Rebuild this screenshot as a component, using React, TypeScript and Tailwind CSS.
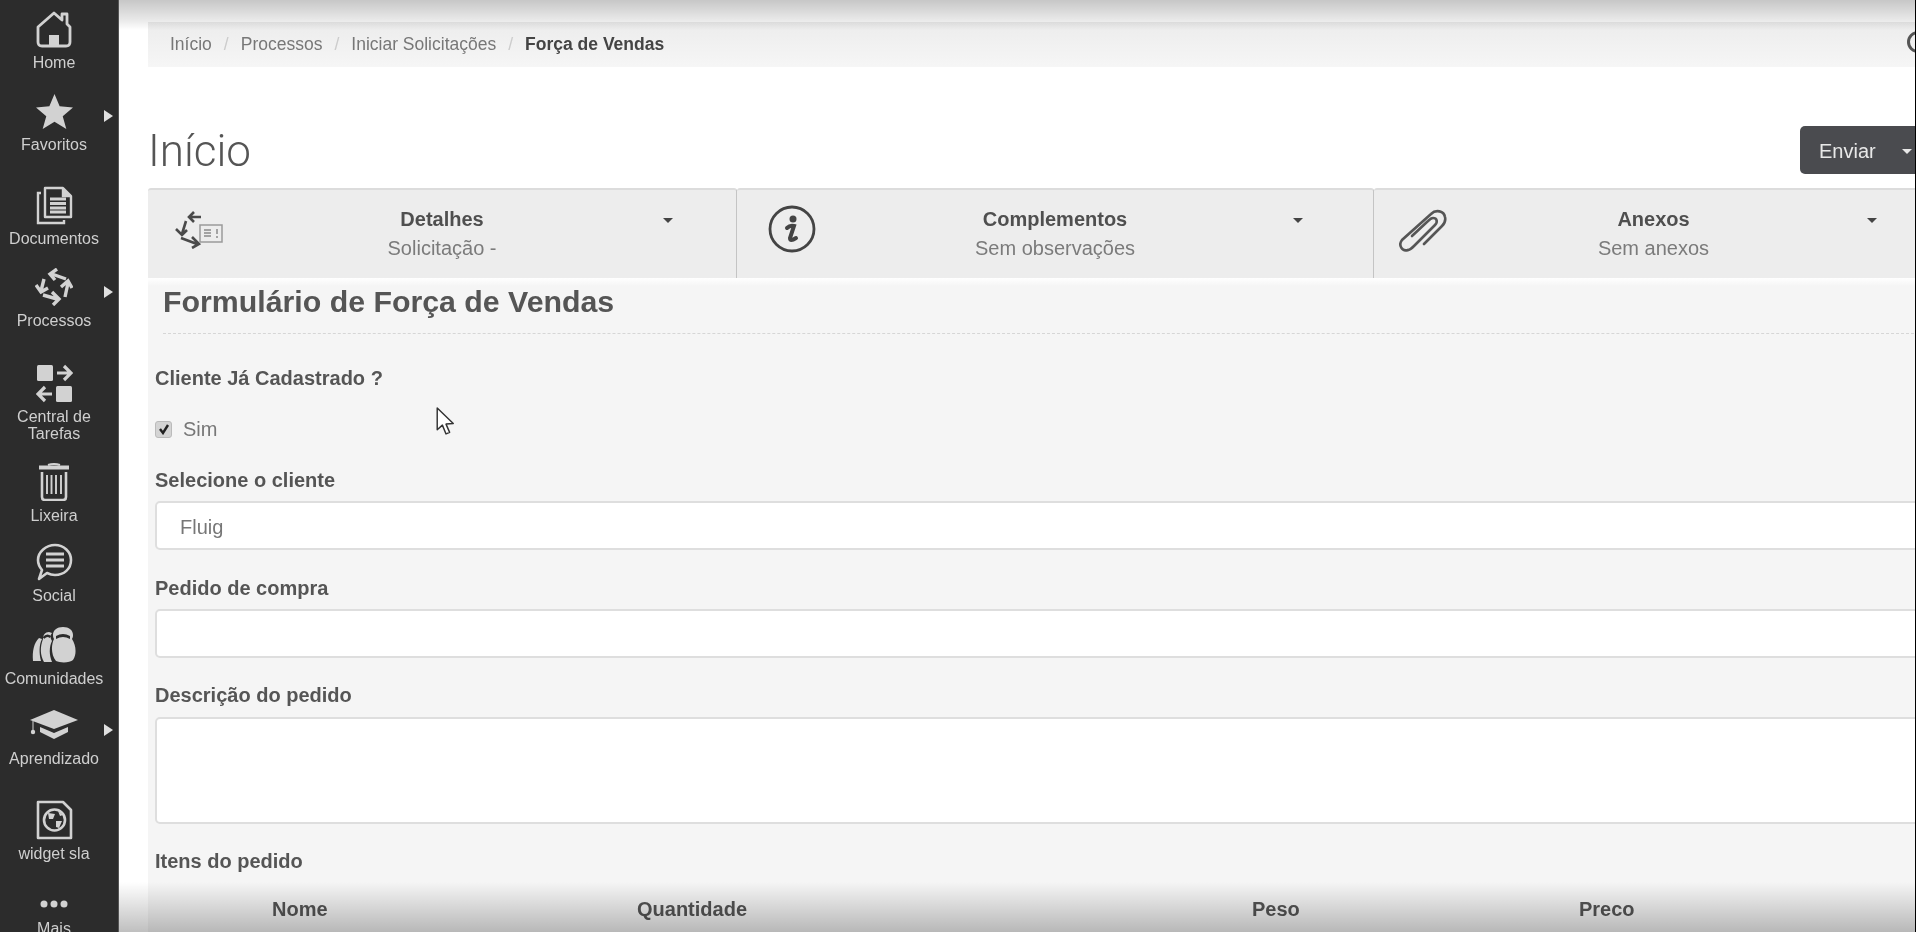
import type { ReactNode } from "react";

const Home = () => (
  <svg viewBox="0 0 36 38" className="w-[36px] h-[38px]" fill="none" stroke="currentColor" strokeWidth="2.8">
    <path d="M2 17 L18 3 L26 10 V4 H31 V14 L34 17 V32 Q34 36 30 36 H6 Q2 36 2 32 Z" strokeLinejoin="round" />
    <path d="M13 36 V25 H23 V36 Z" fill="currentColor" stroke="none" />
  </svg>
);

const Star = () => (
  <svg viewBox="0 0 36 34" className="w-[37px] h-[35px]" fill="currentColor">
    <path d="M18 0 L23 12 L36 13 L26 21.5 L29.5 34 L18 27 L6.5 34 L10 21.5 L0 13 L13 12 Z" />
  </svg>
);

const Docs = () => (
  <svg viewBox="0 0 37 39" className="w-[37px] h-[39px]" fill="none" stroke="currentColor" strokeWidth="2.4">
    <path d="M9 2 H27 L35 10 V31 H9 Z" strokeLinejoin="round" />
    <path d="M27 2 V10 H35" fill="currentColor" />
    <path d="M5 7 H2 V37 H28 V34" />
    <path d="M14 13 H30 M14 17.5 H30 M14 22 H30 M14 26 H30" strokeWidth="2.8" />
  </svg>
);

const Arrows = () => (
  <svg viewBox="0 0 38 38" className="w-[38px] h-[38px]" fill="none" stroke="currentColor" strokeWidth="3.4">
    <path d="M31 11 L17 6 M22 1 L15 6 L20 12" />
    <path d="M9 11 L6 23 M1 17 L6 24 L13 20" />
    <path d="M8 27 L22 31 M17 24 L24 31 L18 37" />
    <path d="M30 29 L33 15 M26 19 L33 13 L37 20" />
  </svg>
);

const Central = () => (
  <svg viewBox="0 0 37 39" className="w-[37px] h-[39px]">
    <rect x="1" y="1" width="16" height="16" rx="1.5" fill="currentColor" />
    <rect x="20" y="22" width="16" height="16" rx="1.5" fill="currentColor" />
    <path d="M21 9 H35 M28 2 L35 9 L28 16" fill="none" stroke="currentColor" strokeWidth="3.2" />
    <path d="M16 30 H2 M9 23 L2 30 L9 37" fill="none" stroke="currentColor" strokeWidth="3.2" />
  </svg>
);

const Trash = () => (
  <svg viewBox="0 0 30 38" className="w-[30px] h-[38px]" fill="none" stroke="currentColor" strokeWidth="2">
    <path d="M0 4.5 H30" strokeWidth="4" />
    <path d="M9 2 Q15 0 21 2" strokeWidth="2" />
    <path d="M3 9 V34 Q3 37 6 37 H24 Q27 37 27 34 V9" strokeWidth="2.6" />
    <path d="M8 12 V31 M12.500 12 V31 M17 12 V31 M22 12 V31" strokeWidth="1.9" />
  </svg>
);

const Social = () => (
  <svg viewBox="0 0 37 38" className="w-[37px] h-[38px]" fill="none" stroke="currentColor" strokeWidth="2.6">
    <path d="M19 2 C28 2 35 9 35 17 C35 26 28 32 19 32 C16 32 13 31 11 30 L3 36 L6 27 C3.500 24 2 21 2 17 C2 9 10 2 19 2 Z" strokeLinejoin="round" />
    <path d="M10 11 H28 M10 17 H28 M10 23 H28" strokeWidth="3.2" />
  </svg>
);

const People = () => (
  <svg viewBox="0 0 44 36" className="w-[44px] h-[36px]" fill="currentColor">
    <path d="M7 11 C2 16 0 24 1 34 H9 C7 26 7 18 10 12 Z" />
    <path d="M17 5 C13 5 11 8 11 12 C8 20 8 28 12 35 H20 C17 28 17 20 20 14 C18 11 18 8 20 6 Z" />
    <path d="M31 0 C25 0 21 3 21 8 C21 9 21 10 22 12 C19 18 19 28 24 34 C28 36 38 36 41 33 C45 27 44 18 40 12 C41 10 41 9 41 8 C41 3 37 0 31 0 Z" />
    <path d="M11.500 11 Q15 7 18.500 10" fill="none" stroke="#2c2c2c" strokeWidth="2.4" />
    <path d="M24 9 Q31 5 38 9 L38 12 Q31 8 24 12 Z" fill="#2c2c2c" />
  </svg>
);

const Cap = () => (
  <svg viewBox="0 0 48 30" className="w-[48px] h-[30px]" fill="currentColor">
    <path d="M24 0 L48 10 L24 19 L0 10 Z" />
    <path d="M10 17 L24 23 L38 17 V22 L24 29 L10 22 Z" />
    <path d="M3 11 V20" stroke="currentColor" strokeWidth="1" />
    <circle cx="3" cy="22" r="2.200" />
  </svg>
);

const Widget = () => (
  <svg viewBox="0 0 37 40" className="w-[37px] h-[40px]" fill="none" stroke="currentColor" strokeWidth="2.6">
    <path d="M2 2 H27 L35 10 V38 H2 Z" strokeLinejoin="round" />
    <circle cx="18.5" cy="20" r="10.500" strokeWidth="2.6" />
    <path d="M12 13 L19 14 L17 19 L13 19 Z M20 21 L26 21 L23 28 L20 27 Z M22 11 L27 15 L24 16 Z" fill="currentColor" stroke="none" />
  </svg>
);

const Dots = () => (
  <svg viewBox="0 0 28 8" className="w-[28px] h-[8px]" fill="currentColor">
    <circle cx="4" cy="4" r="3.500" />
    <circle cx="14" cy="4" r="3.500" />
    <circle cx="24" cy="4" r="3.500" />
  </svg>
);

const navItems: { label: ReactNode; icon: ReactNode; mt: string; arrow?: boolean }[] = [
  { label: "Home", icon: <Home />, mt: "mt-[9px]" },
  { label: "Favoritos", icon: <Star />, mt: "mt-[20px]", arrow: true },
  { label: "Documentos", icon: <Docs />, mt: "mt-[32px]" },
  { label: "Processos", icon: <Arrows />, mt: "mt-[20px]", arrow: true },
  { label: <>Central de<br />Tarefas</>, icon: <Central />, mt: "mt-[34px]" },
  { label: "Lixeira", icon: <Trash />, mt: "mt-[20px]" },
  { label: "Social", icon: <Social />, mt: "mt-[18px]" },
  { label: "Comunidades", icon: <People />, mt: "mt-[21px]" },
  { label: "Aprendizado", icon: <Cap />, mt: "mt-[18px]", arrow: true },
  { label: "widget sla", icon: <Widget />, mt: "mt-[33px]" },
];

function Sidebar() {
  return (
    <aside className="w-[119px] h-[932px] shrink-0 overflow-hidden bg-[#2c2c2c] text-[#d2d2d2] border-r border-[#555555]">
      {navItems.map((item, i) => (
        <div key={i} className={`relative w-[108px] flex flex-col items-center ${item.mt}`}>
          <div className="h-[40px] flex items-center justify-center">{item.icon}</div>
          <div className="mt-[5px] text-[16px] leading-[17px] text-center text-[#cfcfcf] whitespace-nowrap">{item.label}</div>
          {item.arrow && (
            <span className="absolute left-[104px] top-[19px] w-0 h-0 border-y-[6px] border-y-transparent border-l-[9px] border-l-[#e0e0e0]" />
          )}
        </div>
      ))}
      <div className="w-[108px] mt-[26px] flex flex-col items-center">
        <div className="h-[32px] flex items-center justify-center">
          <Dots />
        </div>
        <div className="text-[16px] leading-[17px] text-[#cfcfcf]">Mais</div>
      </div>
    </aside>
  );
}

const Caret = ({ className }: { className?: string }) => (
  <span className={`w-0 h-0 border-x-[5px] border-x-transparent border-t-[5px] border-t-[#444444] ${className ?? ""}`} />
);

const DetailsIcon = () => (
  <svg viewBox="0 0 48 38" className="w-[48px] h-[38px] text-[#4a4a4a]">
    <g fill="none" stroke="currentColor" strokeWidth="2.6">
      <path d="M26 6 H14 M19 1 L14 6 L19 11" />
      <path d="M11 10 L7 23 M1 18 L7 24 L12 19" />
      <path d="M6 27 L22 33 M17 26 L24 33 L17 37" />
    </g>
    <rect x="25" y="14" width="22" height="17" fill="none" stroke="#9a9a9a" strokeWidth="1.5" />
    <path d="M29 19 H36 M29 22 H36 M29 25 H36 M42 18 V23 M42 25 V27" stroke="#8a8a8a" strokeWidth="1.500" fill="none" />
  </svg>
);

const InfoIcon = () => (
  <svg viewBox="0 0 48 48" className="w-[48px] h-[48px] text-[#444444]">
    <circle cx="24" cy="24" r="22" fill="none" stroke="currentColor" strokeWidth="2.8" />
    <circle cx="25" cy="14" r="3.500" fill="currentColor" />
    <path d="M19 23 Q22 20 26 21 Q24 27 22 33 Q22 37 28 33" fill="none" stroke="currentColor" strokeWidth="4" strokeLinecap="round" />
  </svg>
);

const ClipIcon = () => (
  <svg viewBox="0 0 48 44" className="w-[48px] h-[44px] text-[#555555]" fill="none" stroke="currentColor" strokeWidth="2.6" strokeLinecap="round">
    <path d="M9 41 C3 43 -1 36 3 31 L32 5 C37 0 45 2 46 8 C47 12 45 15 43 17 L25 35" />
    <path d="M9 41 C11 41 13 39 15 37 L36 16 C39 13 38 9 34 9 C32 9 31 10 29 12 L13 27" />
  </svg>
);

const tabs = [
  { title: "Detalhes", sub: "Solicitação -", icon: <DetailsIcon />, box: "w-[589px]", iconBox: "left-[27px] top-[21px]", caret: "left-[515px]" },
  { title: "Complementos", sub: "Sem observações", icon: <InfoIcon />, box: "w-[637px]", iconBox: "left-[31px] top-[15px]", caret: "left-[556px]" },
  { title: "Anexos", sub: "Sem anexos", icon: <ClipIcon />, box: "w-[560px]", iconBox: "left-[25px] top-[19px]", caret: "left-[493px]" },
];

function Tabs() {
  return (
    <div className="flex h-[90px]">
      {tabs.map((t) => (
        <div key={t.title} className={`relative h-full shrink-0 bg-[#ededed] border-t-2 border-t-[#dcdcdc] border-r border-r-[#c4c4c4] rounded-t-[3px] flex flex-col items-center pt-[16px] ${t.box}`}>
          <div className={`absolute ${t.iconBox}`}>{t.icon}</div>
          <Caret className={`absolute top-[28px] ${t.caret}`} />
          <div className="text-[20px] leading-[26px] font-bold text-[#4f4f4f]">{t.title}</div>
          <div className="text-[20px] leading-[26px] mt-[3px] text-[#7b7b7b]">{t.sub}</div>
        </div>
      ))}
    </div>
  );
}

const FieldLabel = ({ children, className }: { children: ReactNode; className: string }) => (
  <div className={`text-[20px] leading-[22px] font-bold text-[#555555] ${className}`}>{children}</div>
);

const Box = ({ className, children }: { className: string; children?: ReactNode }) => (
  <div className={`bg-white border-2 border-[#dedede] rounded-[5px] text-[20px] text-[#777777] pl-[23px] flex items-center ${className}`}>
    {children}
  </div>
);

function Form() {
  return (
    <div className="bg-[#f5f5f5] h-[654px] pl-[7px] relative">
      <div className="h-[8px] -ml-[7px] bg-linear-to-b from-white to-[#f5f5f5]" />
      <h2 className="ml-[8px] text-[30.3px] leading-[32px] font-bold text-[#555555]">Formulário de Força de Vendas</h2>
      <div className="ml-[8px] mt-[15px] border-t border-dashed border-[#d6d6d6]" />
      <FieldLabel className="mt-[33px]">Cliente Já Cadastrado ?</FieldLabel>
      <div className="mt-[30px] flex items-center h-[20px]">
        <span className="w-[17px] h-[17px] rounded-[3px] bg-[#d4d4d4] border border-[#bbbbbb] flex items-center justify-center">
          <svg viewBox="0 0 12 12" className="w-[12px] h-[12px]" fill="none" stroke="#222222" strokeWidth="2.4">
            <path d="M2 6 L5 10 L10 2" />
          </svg>
        </span>
        <span className="ml-[11px] text-[20px] text-[#777777]">Sim</span>
      </div>
      <FieldLabel className="mt-[30px]">Selecione o cliente</FieldLabel>
      <Box className="mt-[10px] h-[49px] pt-[2px]">Fluig</Box>
      <FieldLabel className="mt-[27px]">Pedido de compra</FieldLabel>
      <Box className="mt-[10px] h-[49px]" />
      <FieldLabel className="mt-[26px]">Descrição do pedido</FieldLabel>
      <Box className="mt-[11px] h-[107px]" />
      <FieldLabel className="mt-[26px]">Itens do pedido</FieldLabel>
      <div className="relative mt-[26px] h-[22px] text-[20px] leading-[22px] font-bold text-[#555555]">
        <span className="absolute left-[117px]">Nome</span>
        <span className="absolute left-[482px]">Quantidade</span>
        <span className="absolute left-[1097px]">Peso</span>
        <span className="absolute left-[1424px]">Preco</span>
      </div>
    </div>
  );
}

export default function App() {
  return (
    <div className="w-[1916px] h-[932px] flex overflow-hidden bg-white border-r border-black font-['Liberation_Sans',Arial,sans-serif] blur-[0.4px]">
      <Sidebar />
      <main className="relative flex-1 h-[932px] overflow-hidden bg-white">
        <div className="ml-[29px] w-[1786px]">
          <div className="mt-[22px] h-[45px] bg-linear-to-b from-[#ececec] to-[#f6f6f6] flex items-center pl-[22px] text-[17.5px] text-[#777777]">
            <span>Início</span>
            <span className="mx-[12px] text-[#cccccc]">/</span>
            <span>Processos</span>
            <span className="mx-[12px] text-[#cccccc]">/</span>
            <span>Iniciar Solicitações</span>
            <span className="mx-[12px] text-[#cccccc]">/</span>
            <span className="font-bold text-[#444444]">Força de Vendas</span>
          </div>
          <div className="mt-[59px] h-[48px] flex items-center justify-between">
            <h1 className="pt-[2px] font-['Roboto',sans-serif] font-light text-[44px] leading-[48px] text-[#555555]">Início</h1>
            <div className="w-[134px] h-[48px] ml-auto pt-[2px] rounded-[5px] bg-[#4a4b4f] text-[#e8e8e8] text-[20px] flex items-center pl-[19px]">
              Enviar
              <Caret className="ml-[26px] !border-t-[#e8e8e8]" />
            </div>
          </div>
          <div className="mt-[14px]">
            <Tabs />
          </div>
          <Form />
        </div>
        {/* search icon cut by the window edge */}
        <div className="absolute right-[-14px] top-[31px] w-[22px] h-[22px] rounded-full border-[3px] border-[#555555]" />
        {/* video vignette */}
        <div className="absolute inset-x-0 top-0 h-[30px] bg-linear-to-b from-black/22 via-black/8 via-70% to-transparent pointer-events-none" />
        <div className="absolute inset-x-0 bottom-0 h-[50px] bg-linear-to-t from-black/25 to-transparent pointer-events-none" />
        <svg viewBox="0 0 18 28" className="absolute left-[317px] top-[407px] w-[19px] h-[29px]" fill="white" stroke="#333333" strokeWidth="1.4">
          <path d="M1 1 V22 L6 17.500 L9.500 26 L13 24.500 L9.500 16.500 L16.500 16 Z" strokeLinejoin="round" />
        </svg>
      </main>
    </div>
  );
}
